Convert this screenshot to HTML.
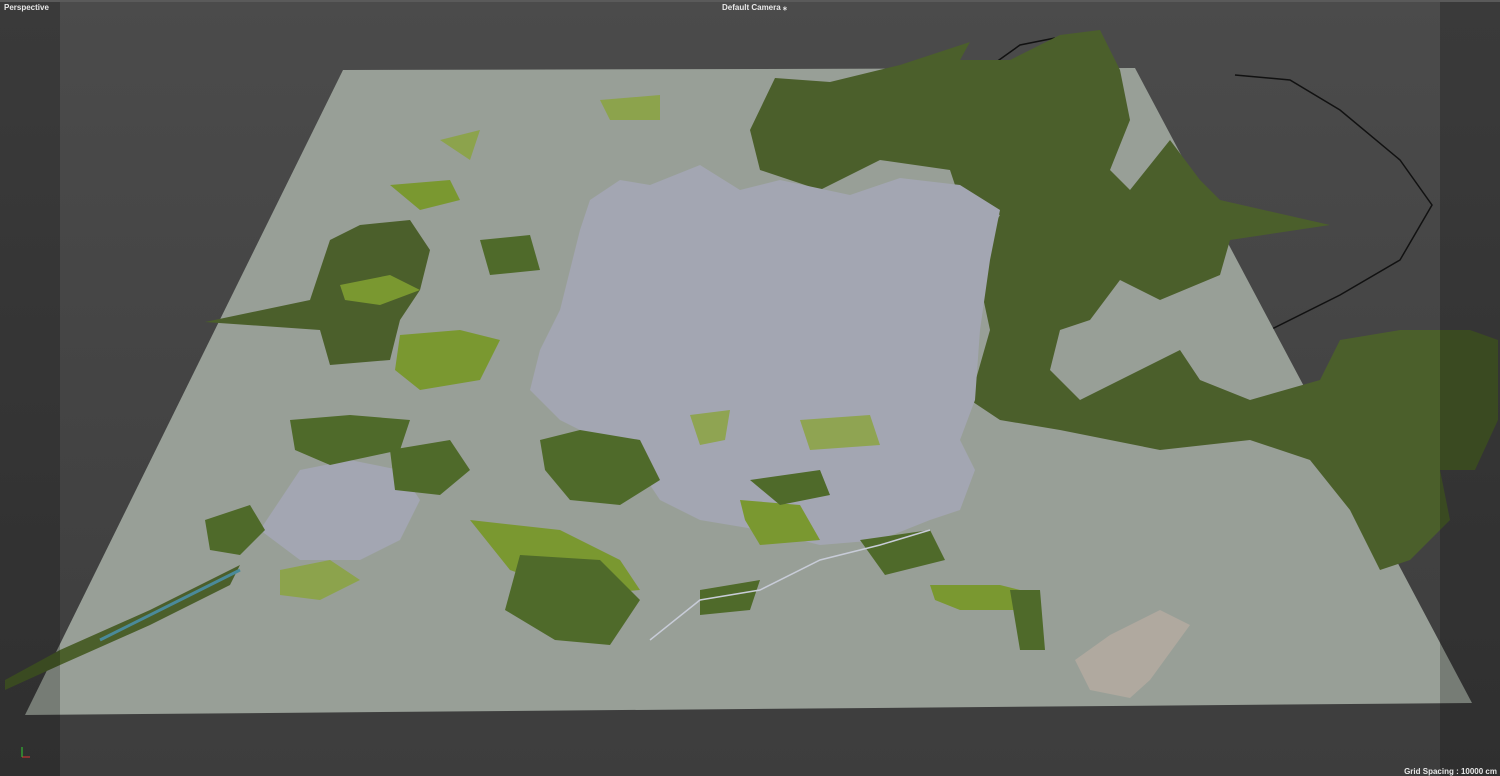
<!DOCTYPE html>
<html><head><style>
html,body{margin:0;width:1500px;height:776px;overflow:hidden;background:#444;font-family:"Liberation Sans",sans-serif}
.t{position:absolute;color:#e8e8e8;font-size:8px;font-weight:bold;white-space:nowrap}
</style></head><body>
<svg width="1500" height="776" style="position:absolute;left:0;top:0">
<defs>
<linearGradient id="bg" x1="0" y1="0" x2="0" y2="1"><stop offset="0" stop-color="#4b4b4b"/><stop offset="1" stop-color="#3d3d3d"/></linearGradient>
</defs>
<rect width="1500" height="776" fill="url(#bg)"/>
<path d="M1235 75 L1290 80 L1340 110 L1400 160 L1432 205 L1400 260 L1340 295 L1270 330" fill="none" stroke="#111" stroke-width="1.5"/>
<path d="M985 70 L1020 45 L1055 38" fill="none" stroke="#111" stroke-width="1.5"/>
<polygon points="343,70 1135,68 1472,703 25,715" fill="#989f97"/>
<path fill="#4b5f2b" d="M750 130 L775 78 L830 82 L900 65 L970 42 L960 60 L1010 60 L1060 35 L1100 30 L1120 70 L1130 120 L1110 170 L1130 190 L1170 140 L1200 180 L1220 200 L1330 225 L1230 240 L1220 275 L1160 300 L1120 280 L1090 320 L1060 330 L1050 370 L1080 400 L1120 380 L1180 350 L1200 380 L1250 400 L1320 380 L1340 340 L1400 330 L1470 330 L1498 340 L1498 420 L1475 470 L1440 470 L1450 520 L1410 560 L1380 570 L1350 510 L1310 460 L1250 440 L1160 450 L1060 430 L1000 420 L970 400 L990 330 L975 260 L1000 215 L960 200 L950 170 L880 160 L820 190 L760 170 Z"/>
<path fill="#4b5f2b" d="M205 322 L310 300 L330 240 L360 225 L410 220 L430 250 L420 290 L400 320 L390 360 L330 365 L320 330 Z"/>
<path fill="#4b5f2b" d="M5 680 L60 650 L150 610 L220 575 L240 565 L230 585 L150 625 L60 665 L5 690 Z"/>
<path fill="#a3a6b2" d="M590 200 L620 180 L650 185 L700 165 L740 190 L780 180 L850 195 L900 178 L960 185 L1000 210 L990 260 L980 330 L975 400 L960 440 L975 470 L960 510 L930 520 L880 540 L820 545 L760 530 L700 520 L660 500 L640 470 L600 440 L560 420 L530 390 L540 350 L560 310 L570 270 L580 230 Z"/>
<path fill="#a3a6b2" d="M300 470 L350 460 L400 470 L420 500 L400 540 L360 560 L300 560 L260 530 Z"/>
<g fill="#7a9830">
<polygon points="400,335 460,330 500,340 480,380 420,390 395,370"/>
<polygon points="340,285 390,275 420,290 380,305 345,300"/>
<polygon points="470,520 560,530 620,560 640,590 580,595 510,570"/>
<polygon points="740,500 800,505 820,540 760,545 745,520"/>
<polygon points="930,585 1000,585 1040,595 1030,610 960,610 935,600"/>
<polygon points="390,185 450,180 460,200 420,210"/>
</g>
<g fill="#4f6a2a">
<polygon points="520,555 600,560 640,600 610,645 555,640 505,610"/>
<polygon points="540,440 580,430 640,440 660,480 620,505 570,500 545,470"/>
<polygon points="205,520 250,505 265,530 240,555 210,550"/>
<polygon points="290,420 350,415 410,420 400,450 330,465 295,450"/>
<polygon points="390,450 450,440 470,470 440,495 395,490"/>
<polygon points="750,480 820,470 830,495 780,505"/>
<polygon points="1010,590 1040,590 1045,650 1020,650"/>
<polygon points="860,540 930,530 945,560 885,575"/>
<polygon points="480,240 530,235 540,270 490,275"/>
<polygon points="700,590 760,580 750,610 700,615"/>
</g>
<g fill="#8aa43a" opacity="0.8">
<polygon points="280,570 330,560 360,580 320,600 280,595"/>
<polygon points="690,415 730,410 725,440 700,445"/>
<polygon points="440,140 480,130 470,160"/>
<polygon points="600,100 660,95 660,120 610,120"/>
<polygon points="800,420 870,415 880,445 810,450"/>
</g>
<polygon points="1075,660 1110,635 1160,610 1190,625 1150,680 1130,698 1090,690" fill="#b0a99f"/>
<path d="M650 640 L700 600 L760 590 L820 560 L880 545 L930 530" fill="none" stroke="#c8ccd8" stroke-width="1.5"/>
<path d="M100 640 L180 600 L240 570" fill="none" stroke="#4a8a9a" stroke-width="3"/>
<rect x="0" y="0" width="60" height="776" fill="#000" opacity="0.22"/>
<rect x="1440" y="0" width="60" height="776" fill="#000" opacity="0.22"/>
<rect x="0" y="0" width="1500" height="2" fill="#5a5a5a"/>
<path d="M22 757 L30 757" stroke="#d33" stroke-width="1"/>
<path d="M22 757 L22 747" stroke="#3c3" stroke-width="1"/>
</svg>
<div class="t" style="left:4px;top:3px">Perspective</div>
<div class="t" style="left:722px;top:3px">Default Camera ⁎</div>
<div class="t" style="right:3px;top:767px">Grid Spacing : 10000 cm</div>
</body></html>
